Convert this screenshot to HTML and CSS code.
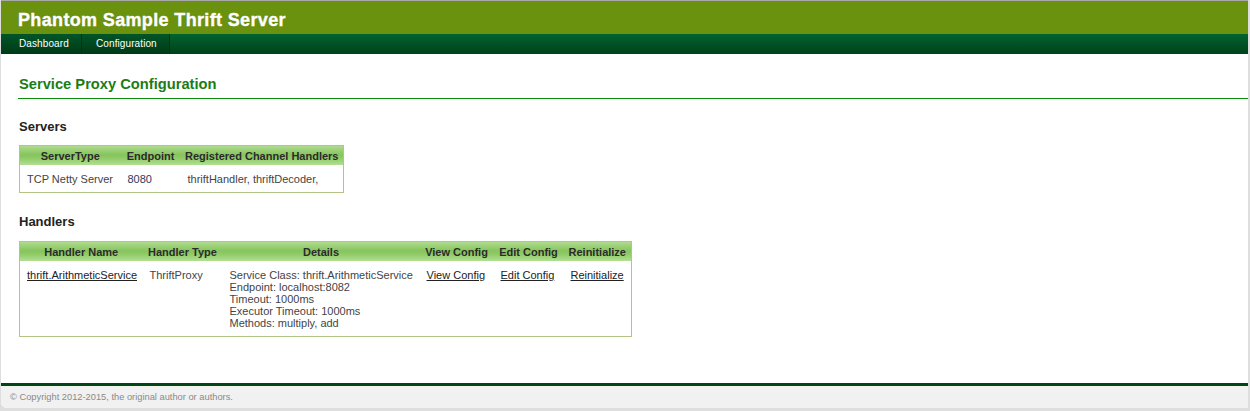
FILE: index.html
```html
<!DOCTYPE html>
<html>
<head>
<meta charset="utf-8">
<link rel="stylesheet" href="styles.css">
<title>Phantom Sample Thrift Server</title>
</head>
<body>
<div class="page">
  <header class="masthead">
    <h1 class="brand">Phantom Sample Thrift Server</h1>
  </header>
  <nav class="nav">
    <a class="tab tab-first" href="#">Dashboard</a>
    <a class="tab tab-second" href="#">Configuration</a>
  </nav>
  <main class="content">
    <h2 class="page-title">Service Proxy Configuration</h2>

    <h3 class="section">Servers</h3>
    <table class="grid servers">
      <colgroup>
        <col class="w101"><col class="w60"><col class="w163">
      </colgroup>
      <thead>
        <tr><th>ServerType</th><th>Endpoint</th><th>Registered Channel Handlers</th></tr>
      </thead>
      <tbody>
        <tr><td>TCP Netty Server</td><td class="num">8080</td><td>thriftHandler, thriftDecoder,</td></tr>
      </tbody>
    </table>

    <h3 class="section section-handlers">Handlers</h3>
    <table class="grid handlers">
      <colgroup>
        <col class="w123"><col class="w80"><col class="w197"><col class="w74"><col class="w70"><col class="w68">
      </colgroup>
      <thead>
        <tr><th>Handler Name</th><th>Handler Type</th><th>Details</th><th>View Config</th><th>Edit Config</th><th>Reinitialize</th></tr>
      </thead>
      <tbody>
        <tr>
          <td><a href="#">thrift.ArithmeticService</a></td>
          <td>ThriftProxy</td>
          <td>Service Class: thrift.ArithmeticService<br>Endpoint: localhost:8082<br>Timeout: 1000ms<br>Executor Timeout: 1000ms<br>Methods: multiply, add</td>
          <td><a href="#">View Config</a></td>
          <td><a href="#">Edit Config</a></td>
          <td><a href="#">Reinitialize</a></td>
        </tr>
      </tbody>
    </table>
  </main>
  <footer class="footer">
    <p class="copy">© Copyright 2012-2015, the original author or authors.</p>
  </footer>
</div>
</body>
</html>
```

FILE: styles.css
```css
html, body {
  margin: 0;
  padding: 0;
}
body {
  background: #dedede;
  font-family: "Liberation Sans", Arial, sans-serif;
  height: 411px;
  overflow: hidden;
}
.page {
  margin: 0 2px 0 1px;
  border-top: 1px solid #a8a8a8;
  background: #fff;
  display: flex;
  flex-direction: column;
  height: 407px;
  border-bottom-left-radius: 6px;
  overflow: hidden;
}
.masthead {
  background: #6b920e;
  height: 33px;
  padding: 0 17px;
  display: flex;
  align-items: flex-end;
}
.brand {
  margin: 0 0 3px;
  color: #fff;
  font-size: 18px;
  font-weight: bold;
  letter-spacing: 0.35px;
  line-height: 22px;
  -webkit-text-stroke: 0.4px #fff;
  text-shadow: 0 0 1px rgba(0,0,0,0.25);
}
.nav {
  height: 20px;
  background: linear-gradient(#006330, #004119);
  display: flex;
}
.tab {
  color: #fff;
  text-decoration: none;
  font-size: 10px;
  letter-spacing: 0.1px;
  line-height: 20px;
  background: linear-gradient(#005528, #003a17);
  border-right: 1px solid #00341a;
  box-sizing: border-box;
}
.tab-first {
  width: 81px;
  padding-left: 18px;
}
.tab-second {
  width: 88px;
  padding-left: 14px;
}
.content {
  flex: 1;
  padding: 0 0 0 17px;
}
.page-title {
  margin: 21px 0 0;
  padding: 0 0 5px 1px;
  color: #1a7d16;
  font-size: 14.7px;
  line-height: 18px;
  font-weight: bold;
  border-bottom: 1px solid #0b8f0b;
}
.section {
  margin: 20px 0 0 1px;
  font-size: 13px;
  line-height: 16px;
  color: #222;
  font-weight: bold;
}
.section-handlers {
  margin-top: 21px;
}
.grid {
  margin: 10px 0 0 1px;
  border-collapse: collapse;
  border: 1px solid #b3c486;
  font-size: 11px;
  color: #444;
  table-layout: fixed;
}
.servers { width: 325px; }
.handlers { width: 613px; margin-top: 11px; }
.w101 { width: 101px; }
.w60 { width: 60px; }
.w163 { width: 163px; }
.w123 { width: 123px; }
.w80 { width: 80px; }
.w197 { width: 197px; }
.w74 { width: 74px; }
.w70 { width: 70px; }
.w68 { width: 68px; }
.grid th {
  background: linear-gradient(#abd98a 0%, #86c45c 45%, #8fca66 60%, #b5e196 100%);
  color: #2b2b2b;
  font-weight: bold;
  height: 19px;
  padding: 0;
  text-align: center;
  white-space: nowrap;
  overflow: visible;
}
.grid td {
  padding: 8px 0 7px 7px;
  vertical-align: top;
  line-height: 12px;
  white-space: nowrap;
}
.num {
  color: #2e3a5c;
}
.grid a {
  color: #222;
}
.footer {
  border-top: 3px solid #004513;
  background: #f1f1f1;
  height: 22px;
}
.copy {
  margin: 0;
  padding: 0 0 0 9px;
  font-size: 9.3px;
  line-height: 23px;
  color: #8a8a8a;
}
```
